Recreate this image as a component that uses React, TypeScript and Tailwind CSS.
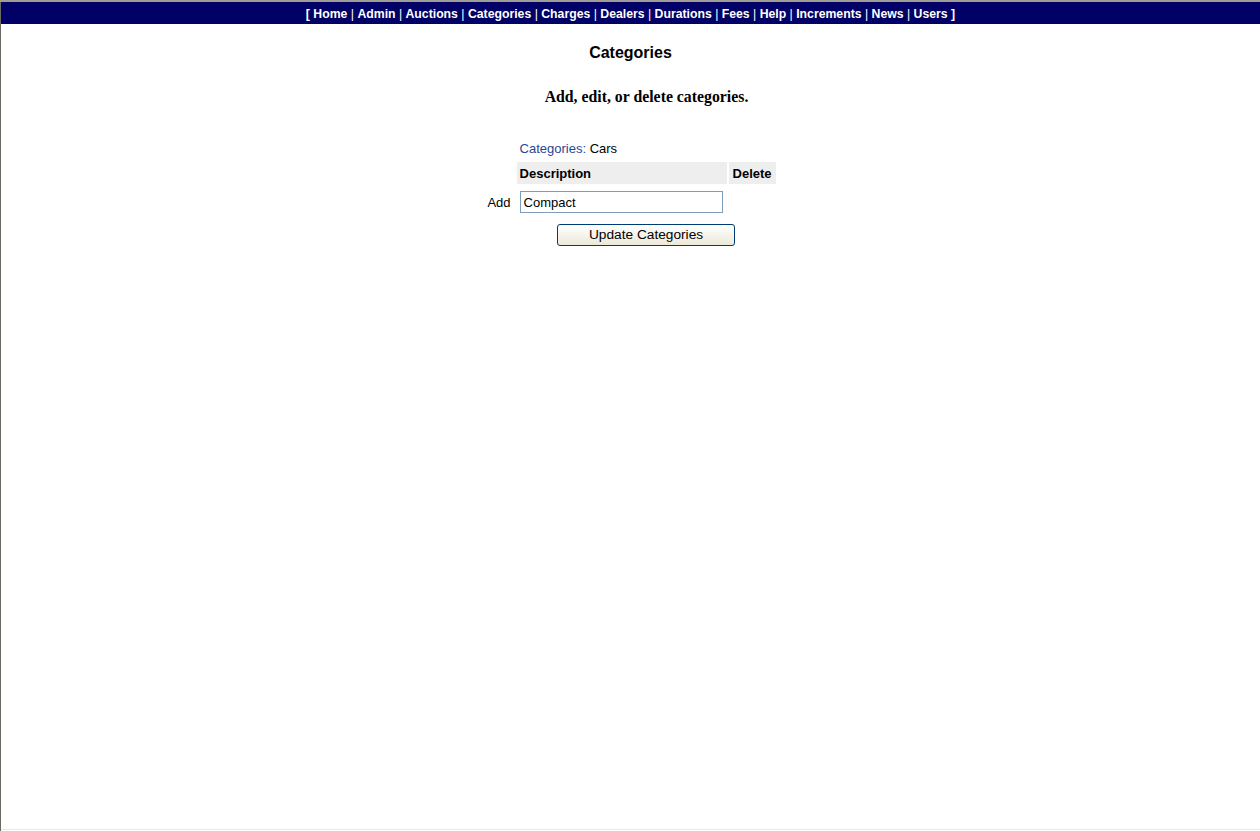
const links = ['Home', 'Admin', 'Auctions', 'Categories', 'Charges', 'Dealers', 'Durations', 'Fees', 'Help', 'Increments', 'News', 'Users'];

export default function App() {
  return (
    <div className="relative h-[831px] w-[1260px] overflow-hidden border-t-2 border-[#a09c94] bg-white font-['Liberation_Sans',Arial,sans-serif]">
      <div className="flex h-full flex-col border-l border-[#6b6b63] pb-[1px]">
        <nav className="h-[22px] bg-[#000066] pt-[2px] text-center text-[12.25px] leading-[20px] font-bold whitespace-nowrap text-white">
          [{' '}
          {links.map((link, i) => (
            <span key={link}>
              {i > 0 && <span className="font-normal"> | </span>}
              <a href="#" className="text-white">{link}</a>
            </span>
          ))}{' '}
          ]
        </nav>

        <div className="flex flex-1 flex-col items-center border-b border-[#ece9d8]">
          <h1 className="mt-[19px] text-[16px] leading-[20px] font-bold text-black">Categories</h1>
          <p className="mt-[25px] ml-[32px] font-['Liberation_Serif','Times_New_Roman',serif] text-[15.8px] leading-[18px] font-bold text-black">
            Add, edit, or delete categories.
          </p>

          <table className="mt-[33px] border-separate border-spacing-[2px] text-[13px] text-black">
            <tbody>
              <tr>
                <td />
                <td colSpan={2} className="px-[3px] pb-[3px] leading-[16px]">
                  <span className="text-[#1f4896]">Categories:</span> Cars
                </td>
              </tr>
              <tr>
                <td />
                <td className="w-[210px] bg-[#eeeeee] px-[3px] pt-[4px] pb-[2px] leading-[16px] font-bold">Description</td>
                <td className="bg-[#eeeeee] px-[4px] pt-[4px] pb-[2px] leading-[16px] font-bold">Delete</td>
              </tr>
              <tr>
                <td className="pt-[2px] pr-[4px] pl-[2px] text-right">Add</td>
                <td className="py-[5px] pl-[3px]">
                  <input
                    defaultValue="Compact"
                    className="block h-[22px] w-[203px] border border-[#7f9db9] px-[3px] text-[13px] text-black outline-none"
                  />
                </td>
                <td />
              </tr>
              <tr>
                <td />
                <td colSpan={2} className="pt-[4px] text-center">
                  <button
                    type="button"
                    className="h-[22px] w-[178px] rounded-[3px] border border-[#003c74] bg-gradient-to-b from-white to-[#ece9d8] text-[13.7px] text-black"
                  >
                    Update Categories
                  </button>
                </td>
              </tr>
            </tbody>
          </table>
        </div>
      </div>
    </div>
  );
}
